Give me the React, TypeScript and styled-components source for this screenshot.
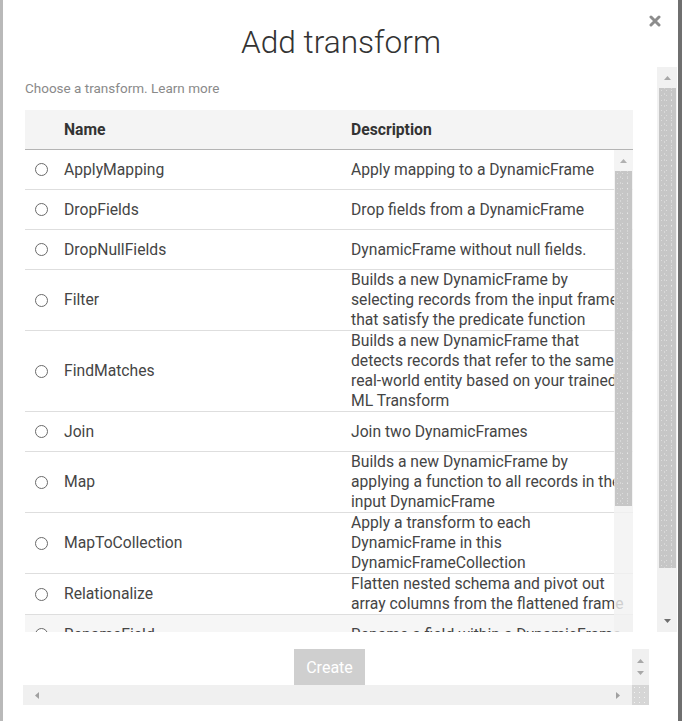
import React from "react";
import styled, { createGlobalStyle } from "styled-components";

const GlobalStyle = createGlobalStyle`
  html, body { margin: 0; padding: 0; }
  body {
    font-family: Roboto, "Liberation Sans", Arial, sans-serif;
    background: #8a8a8a;
    overflow: hidden;
  }
  * { box-sizing: border-box; }
`;

const Page = styled.div`
  display: flex;
  width: 682px;
  height: 721px;
  padding: 0 4px 0 3px;
  background: linear-gradient(to right, #b9b9b9 50%, #6f6f6f 50%);
`;

const Modal = styled.div`
  flex: 1;
  display: flex;
  flex-direction: column;
  background: #ffffff;
  position: relative;
`;

const Header = styled.div`
  height: 67px;
  display: flex;
  align-items: flex-start;
  justify-content: center;
  padding-top: 25px;
  padding-left: 1px;
`;

const Title = styled.h1`
  margin: 0;
  font-size: 31.6px;
  font-weight: 300;
  line-height: 36px;
  color: #333333;
`;

const CloseButton = styled.button`
  position: absolute;
  top: 15px;
  right: 17px;
  width: 12px;
  height: 12px;
  padding: 0;
  border: 0;
  background: none;
  display: flex;
  cursor: pointer;
`;

const ScrollArea = styled.div`
  height: 565px;
  display: flex;
`;

const ScrollContent = styled.div`
  flex: 1;
  display: flex;
  flex-direction: column;
  padding: 0 24px 0 22px;
  overflow: hidden;
`;

const Hint = styled.div`
  padding-top: 11px;
  margin-bottom: 12px;
  font-size: 13.5px;
  line-height: 20px;
  color: #8a8a8a;
`;

const Table = styled.div`
  flex: 1;
  display: flex;
  flex-direction: column;
  min-height: 0;
`;

const HeaderRow = styled.div`
  display: grid;
  grid-template-columns: 39px 287px 1fr;
  height: 40px;
  align-items: center;
  background: #f4f4f4;
  border-bottom: 1px solid #b4b4b4;
  font-size: 15.7px;
  font-weight: 700;
  color: #333333;
`;

const HeadCell = styled.div<{ $col: number }>`
  grid-column: ${(p) => p.$col};
`;

const BodyViewport = styled.div`
  flex: 1;
  position: relative;
  overflow: hidden;
`;

const Row = styled.div<{ $hover?: boolean }>`
  display: grid;
  grid-template-columns: 39px 287px 1fr;
  min-height: 40px;
  align-items: center;
  border-bottom: 1px solid #dedede;
  background: ${(p) => (p.$hover ? "#f6f6f6" : "#ffffff")};
  font-size: 15.7px;
  line-height: 20px;
  color: #454545;
`;

const RadioCell = styled.div`
  display: flex;
  align-items: center;
  padding-left: 10px;
`;

const Radio = styled.span`
  display: block;
  width: 13px;
  height: 13px;
  border-radius: 50%;
  border: 1px solid #6a6a6a;
  background: #ffffff;
`;

const NameCell = styled.div``;

const DescCell = styled.div`
  padding-right: 7px;
`;

const ScrollBar = styled.div<{ $width: number }>`
  width: ${(p) => p.$width}px;
  display: flex;
  flex-direction: column;
  align-items: center;
  background: #f1f1f1;
`;

const OverlayBar = styled.div`
  position: absolute;
  top: 0;
  right: 0;
  bottom: 0;
  width: 19px;
  display: flex;
  flex-direction: column;
  align-items: center;
  background: rgba(241, 241, 241, 0.8);
`;

const ArrowBox = styled.div<{ $h: number }>`
  height: ${(p) => p.$h}px;
  width: 100%;
  display: flex;
  align-items: center;
  justify-content: center;
  flex-shrink: 0;
`;

const Thumb = styled.div<{ $h: number; $w: number }>`
  height: ${(p) => p.$h}px;
  width: ${(p) => p.$w}px;
  flex-shrink: 0;
  background-color: #c6c6c6;
  background-image:
    radial-gradient(rgba(255, 255, 255, 0.4) 0.6px, transparent 0.9px),
    radial-gradient(rgba(255, 255, 255, 0.3) 0.6px, transparent 0.9px);
  background-size: 5px 5px, 7px 6px;
  background-position: 0 0, 2px 3px;
`;

const Spacer = styled.div`
  flex: 1;
`;

const OuterBarWrap = styled.div`
  margin-right: 1px;
  display: flex;
`;

const Footer = styled.div`
  flex: 1;
  padding: 17px 0 0 20px;
`;

const FooterScroll = styled.div`
  width: 626px;
  display: grid;
  grid-template-columns: 1fr 17px;
  grid-template-rows: 36px 20px;
`;

const ButtonCell = styled.div`
  display: flex;
  justify-content: center;
  padding-left: 4px;
`;

const CreateButton = styled.button`
  width: 71px;
  height: 36px;
  border: 0;
  padding: 0;
  background: #cfcfcf;
  color: #ffffff;
  font-family: Roboto, "Liberation Sans", Arial, sans-serif;
  font-size: 16px;
  cursor: default;
`;

const MiniVBar = styled.div`
  background: #f0f0f0;
  display: flex;
  flex-direction: column;
  align-items: center;
  justify-content: center;
  gap: 8px;
`;

const HBar = styled.div`
  background: #f0f0f0;
  display: flex;
  align-items: center;
  justify-content: space-between;
  padding: 0 12px 0 12px;
`;

const Corner = styled.div`
  background-color: #d6d6d6;
  background-image: radial-gradient(rgba(255, 255, 255, 0.7) 0.6px, transparent 0.9px);
  background-size: 5px 5px;
`;

type Dir = "up" | "down" | "left" | "right";

const Arrow: React.FC<{ dir: Dir; color?: string }> = ({ dir, color = "#a5a5a5" }) => {
  const pts: Record<Dir, string> = {
    up: "0,4 3.5,0 7,4",
    down: "0,0 7,0 3.5,4",
    left: "4,0 4,7 0,3.5",
    right: "0,0 0,7 4,3.5",
  };
  const vertical = dir === "up" || dir === "down";
  return (
    <svg width={vertical ? 7 : 4} height={vertical ? 4 : 7} viewBox={vertical ? "0 0 7 4" : "0 0 4 7"}>
      <polygon points={pts[dir]} fill={color} />
    </svg>
  );
};

const rows: [string, string][] = [
  ["ApplyMapping", "Apply mapping to a DynamicFrame"],
  ["DropFields", "Drop fields from a DynamicFrame"],
  ["DropNullFields", "DynamicFrame without null fields."],
  ["Filter", "Builds a new DynamicFrame by selecting records from the input frame that satisfy the predicate function"],
  ["FindMatches", "Builds a new DynamicFrame that detects records that refer to the same real-world entity based on your trained ML Transform"],
  ["Join", "Join two DynamicFrames"],
  ["Map", "Builds a new DynamicFrame by applying a function to all records in the input DynamicFrame"],
  ["MapToCollection", "Apply a transform to each DynamicFrame in this DynamicFrameCollection"],
  ["Relationalize", "Flatten nested schema and pivot out array columns from the flattened frame"],
  ["RenameField", "Rename a field within a DynamicFrame"],
  ["ResolveChoice", "Resolve choice types in a DynamicFrame"],
  ["SelectFields", "Select fields from a DynamicFrame"],
];

export default function App() {
  return (
    <>
      <GlobalStyle />
      <Page>
        <Modal>
          <Header>
            <Title>Add transform</Title>
          </Header>
          <CloseButton aria-label="Close">
            <svg width="12" height="12" viewBox="0 0 12 12">
              <path d="M2 2 L10 10 M10 2 L2 10" stroke="#8c8c8c" strokeWidth="3" strokeLinecap="round" />
            </svg>
          </CloseButton>
          <ScrollArea>
            <ScrollContent>
              <Hint>Choose a transform. Learn more</Hint>
              <Table>
                <HeaderRow>
                  <HeadCell $col={2}>Name</HeadCell>
                  <HeadCell $col={3}>Description</HeadCell>
                </HeaderRow>
                <BodyViewport>
                  {rows.map(([name, desc], i) => (
                    <Row key={name} $hover={i === 9}>
                      <RadioCell>
                        <Radio />
                      </RadioCell>
                      <NameCell>{name}</NameCell>
                      <DescCell>{desc}</DescCell>
                    </Row>
                  ))}
                  <OverlayBar>
                    <ArrowBox $h={21}>
                      <Arrow dir="up" color="#b0b0b0" />
                    </ArrowBox>
                    <Thumb $h={335} $w={17} />
                  </OverlayBar>
                </BodyViewport>
              </Table>
            </ScrollContent>
            <OuterBarWrap>
              <ScrollBar $width={20}>
                <ArrowBox $h={21}>
                  <Arrow dir="up" color="#a8a8a8" />
                </ArrowBox>
                <Thumb $h={480} $w={17} />
                <Spacer />
                <ArrowBox $h={23}>
                  <Arrow dir="down" color="#6e6e6e" />
                </ArrowBox>
              </ScrollBar>
            </OuterBarWrap>
          </ScrollArea>
          <Footer>
            <FooterScroll>
              <ButtonCell>
                <CreateButton>Create</CreateButton>
              </ButtonCell>
              <MiniVBar>
                <Arrow dir="up" color="#a8a8a8" />
                <Arrow dir="down" color="#a8a8a8" />
              </MiniVBar>
              <HBar>
                <Arrow dir="left" color="#a0a0a0" />
                <Arrow dir="right" color="#a0a0a0" />
              </HBar>
              <Corner />
            </FooterScroll>
          </Footer>
        </Modal>
      </Page>
    </>
  );
}
